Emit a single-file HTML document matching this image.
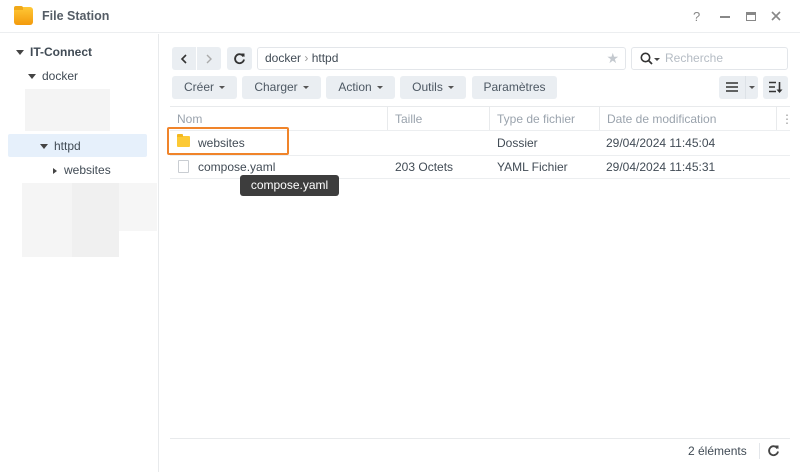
<!DOCTYPE html>
<html><head><meta charset="utf-8"><style>
*{box-sizing:border-box;margin:0;padding:0}
body{width:800px;height:472px;overflow:hidden;background:#fff;font-family:"Liberation Sans","DejaVu Sans",sans-serif;font-size:12px;color:#414b55;position:relative}
.abs{position:absolute}
.btn{position:absolute;background:#eaeef2;border-radius:3px;height:23px;line-height:23px;text-align:center;color:#4d5863;font-size:12px}
.caret{display:inline-block;width:0;height:0;border-left:3px solid transparent;border-right:3px solid transparent;border-top:3px solid #555;vertical-align:middle;margin-left:5px}
.tri{display:inline-block;width:0;height:0;border-left:4px solid transparent;border-right:4px solid transparent;border-top:5px solid #444;vertical-align:middle;margin-right:6px}
.hd{position:absolute;top:108px;height:22px;line-height:22px;color:#9aa3ad;font-size:12px}
.cell{position:absolute;font-size:12px;color:#414b55}
svg{position:absolute}
</style></head><body>
<div class="abs" style="left:0;top:0;width:800px;height:33px;border-bottom:1px solid #eceef0"></div>
<div class="abs" style="left:14px;top:7px;width:19px;height:18px;border-radius:3px;background:linear-gradient(#ffc836,#f39a0c)"></div>
<div class="abs" style="left:14px;top:6px;width:9px;height:4px;border-radius:2px 2px 0 0;background:#f0a818"></div>
<div class="abs" style="left:42px;top:9px;font-weight:bold;font-size:12.5px;color:#555d66">File Station</div>
<div class="abs" style="left:693px;top:9px;color:#888;font-size:13px">?</div>
<div class="abs" style="left:720px;top:16px;width:10px;height:2px;background:#888"></div>
<div class="abs" style="left:746px;top:12px;width:10px;height:9px;border:1.5px solid #888;border-top-width:3px"></div>
<svg style="left:771px;top:11px" width="10" height="10" viewBox="0 0 10 10"><path d="M1 1L9 9M9 1L1 9" stroke="#888" stroke-width="1.6"/></svg>
<div class="abs" style="left:158px;top:34px;width:1px;height:438px;background:#e8eaec"></div>
<div class="abs" style="left:16px;top:45px;font-weight:bold;color:#414b55"><span class="tri"></span>IT-Connect</div>
<div class="abs" style="left:28px;top:69px"><span class="tri"></span>docker</div>
<div class="abs" style="left:25px;top:89px;width:85px;height:42px;background:#f4f4f4"></div>
<div class="abs" style="left:8px;top:134px;width:139px;height:23px;background:#e6f0fb;border-radius:2px"></div>
<div class="abs" style="left:40px;top:139px"><span class="tri"></span>httpd</div>
<div class="abs" style="left:53px;top:163px"><span style="display:inline-block;border-top:3px solid transparent;border-bottom:3px solid transparent;border-left:4px solid #444;margin-right:7px;vertical-align:middle"></span>websites</div>
<div class="abs" style="left:22px;top:183px;width:50px;height:74px;background:#f5f5f5"></div>
<div class="abs" style="left:72px;top:183px;width:47px;height:74px;background:#f0f0f0"></div>
<div class="abs" style="left:119px;top:183px;width:38px;height:48px;background:#f6f6f6"></div>
<!-- toolbar row 1 -->
<div class="btn" style="left:172px;top:47px;width:24px;border-radius:3px 0 0 3px"></div>
<svg style="left:180px;top:54px" width="8" height="10"><path d="M6 1L2 5L6 9" stroke="#333" stroke-width="1.6" fill="none"/></svg>
<div class="btn" style="left:197px;top:47px;width:24px;border-radius:0 3px 3px 0"></div>
<svg style="left:205px;top:54px" width="8" height="10"><path d="M2 1L6 5L2 9" stroke="#aaa" stroke-width="1.4" fill="none"/></svg>
<div class="btn" style="left:227px;top:47px;width:25px"></div>
<svg style="left:233px;top:52px" width="13" height="13" viewBox="0 0 13 13"><path d="M10.5 4.5A4.5 4.5 0 1 0 11 7.5" stroke="#333" stroke-width="1.8" fill="none"/><path d="M8 1.5L11.5 1.5L11.5 5Z" fill="#333"/></svg>
<div class="abs" style="left:257px;top:47px;width:369px;height:23px;border:1px solid #e3e6ea;border-radius:3px;padding-left:7px;line-height:21px;color:#414b55">docker <span style="color:#999">›</span> httpd<span style="position:absolute;right:6px;color:#c4c9cf;font-size:14px">★</span></div>
<div class="abs" style="left:631px;top:47px;width:157px;height:23px;border:1px solid #e3e6ea;border-radius:3px;padding-left:33px;line-height:21px;color:#b5bcc4">Recherche</div>
<svg style="left:640px;top:52px" width="22" height="13" viewBox="0 0 22 13"><circle cx="5.5" cy="5.5" r="4.2" stroke="#333" stroke-width="1.6" fill="none"/><path d="M8.5 8.5L12 12" stroke="#333" stroke-width="1.8"/><path d="M14 6L20 6L17 9Z" fill="#444"/></svg>
<!-- toolbar row 2 -->
<div class="btn" style="left:172px;top:76px;width:65px">Créer<span class="caret"></span></div>
<div class="btn" style="left:242px;top:76px;width:79px">Charger<span class="caret"></span></div>
<div class="btn" style="left:326px;top:76px;width:69px">Action<span class="caret"></span></div>
<div class="btn" style="left:400px;top:76px;width:66px">Outils<span class="caret"></span></div>
<div class="btn" style="left:472px;top:76px;width:85px">Paramètres</div>
<div class="btn" style="left:719px;top:76px;width:26px;border-radius:3px 0 0 3px"></div>
<svg style="left:726px;top:82px" width="12" height="10"><path d="M0 1H12M0 5H12M0 9H12" stroke="#333" stroke-width="1.6"/></svg>
<div class="btn" style="left:745px;top:76px;width:13px;border-radius:0 3px 3px 0;border-left:1px solid #dde2e7"><span class="caret" style="margin:0"></span></div>
<div class="btn" style="left:763px;top:76px;width:25px"></div>
<svg style="left:769px;top:81px" width="14" height="13"><path d="M0 1.5H7M0 6H6M0 10.5H7" stroke="#333" stroke-width="1.5"/><path d="M10.5 1V11" stroke="#333" stroke-width="1.6"/><path d="M7.5 8.5L10.5 12L13.5 8.5Z" fill="#333"/></svg>
<!-- header -->
<div class="abs" style="left:170px;top:106px;width:620px;height:1px;background:#e8eaec"></div>
<div class="abs" style="left:170px;top:130px;width:620px;height:1px;background:#eceef0"></div>
<div class="abs" style="left:387px;top:107px;width:1px;height:23px;background:#e8eaec"></div>
<div class="abs" style="left:489px;top:107px;width:1px;height:23px;background:#e8eaec"></div>
<div class="abs" style="left:599px;top:107px;width:1px;height:23px;background:#e8eaec"></div>
<div class="abs" style="left:776px;top:107px;width:1px;height:23px;background:#e8eaec"></div>
<div class="hd" style="left:177px">Nom</div>
<div class="hd" style="left:395px">Taille</div>
<div class="hd" style="left:497px">Type de fichier</div>
<div class="hd" style="left:607px">Date de modification</div>
<div class="hd" style="left:781px;color:#999">⋮</div>
<!-- rows -->
<div class="abs" style="left:170px;top:155px;width:620px;height:1px;background:#eceef0"></div>
<div class="abs" style="left:170px;top:178px;width:620px;height:1px;background:#eceef0"></div>
<div class="abs" style="left:177px;top:136px;width:13px;height:11px;background:#fcc935;border-radius:1px"></div>
<div class="abs" style="left:177px;top:134px;width:6px;height:3px;background:#f4b81e;border-radius:1px 1px 0 0"></div>
<div class="cell" style="left:198px;top:136px">websites</div>
<div class="cell" style="left:497px;top:136px">Dossier</div>
<div class="cell" style="left:606px;top:136px">29/04/2024 11:45:04</div>
<div class="abs" style="left:167px;top:127px;width:122px;height:28px;border:2px solid #f0842a;border-radius:2px"></div>
<div class="abs" style="left:178px;top:160px;width:11px;height:13px;border:1px solid #c9cdd2;border-radius:1px"></div>
<div class="cell" style="left:198px;top:160px">compose.yaml</div>
<div class="cell" style="left:395px;top:160px">203 Octets</div>
<div class="cell" style="left:497px;top:160px">YAML Fichier</div>
<div class="cell" style="left:606px;top:160px">29/04/2024 11:45:31</div>
<div class="abs" style="left:240px;top:175px;width:99px;height:21px;background:#3d3d3d;border-radius:3px;color:#fff;line-height:21px;text-align:center;font-size:12px">compose.yaml</div>
<!-- footer -->
<div class="abs" style="left:170px;top:438px;width:620px;height:1px;background:#e8eaec"></div>
<div class="abs" style="left:688px;top:444px;color:#414b55">2 éléments</div>
<div class="abs" style="left:759px;top:443px;width:1px;height:16px;background:#e3e6ea"></div>
<svg style="left:767px;top:444px" width="13" height="13" viewBox="0 0 13 13"><path d="M10.5 4.5A4.5 4.5 0 1 0 11 7.5" stroke="#444" stroke-width="1.8" fill="none"/><path d="M8 1.5L11.5 1.5L11.5 5Z" fill="#444"/></svg>
</body></html>
